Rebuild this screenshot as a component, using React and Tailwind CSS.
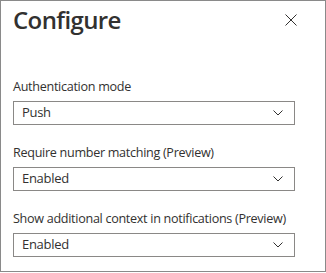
import React, { useState } from 'react';

const fields = [
  { label: 'Authentication mode', value: 'Push' },
  { label: 'Require number matching (Preview)', value: 'Enabled' },
  { label: 'Show additional context in notifications (Preview)', value: 'Enabled' },
];

const Chevron = () => (
  <svg width="10" height="6" viewBox="0 0 10 6" fill="none">
    <path d="M0.5 0.5 L5 5 L9.5 0.5" stroke="#323130" strokeWidth="1" />
  </svg>
);

const Dropdown = ({ label, value }) => (
  <div className="flex flex-col">
    <label className="text-[12.6px] leading-[18px] tracking-[-0.3px] text-[#323130]">{label}</label>
    <button className="mt-[5px] flex h-[24px] w-[282px] items-center justify-between border border-[#8a8886] bg-white pl-[8px] pr-[11px] text-[13px] tracking-[-0.3px] text-[#323130]">
      <span>{value}</span>
      <Chevron />
    </button>
  </div>
);

export default function App() {
  const [open] = useState(true);
  if (!open) return null;

  return (
    <div
      className="h-[272px] w-[326px] border border-[#8a8a8a] bg-white"
      style={{ fontFamily: '"Open Sans", "Noto Sans", sans-serif' }}
    >
      {/* Header */}
      <div className="flex items-start justify-between pl-[12px] pr-[28px] pt-[3px]">
        <h1 className="text-[24px] leading-[32px] font-semibold tracking-[-0.6px] text-[#323130]">Configure</h1>
        <button className="mt-[10px] flex h-[12px] w-[12px] items-center justify-center">
          <svg width="12" height="12" viewBox="0 0 12 12">
            <path d="M0.5 0.5 L11.5 11.5 M11.5 0.5 L0.5 11.5" stroke="#323130" strokeWidth="1" />
          </svg>
        </button>
      </div>

      {/* Fields */}
      <div className="mt-[42px] flex flex-col gap-[19px] pl-[12px]">
        {fields.map((f, idx) => (
          <Dropdown key={idx} label={f.label} value={f.value} />
        ))}
      </div>
    </div>
  );
}
